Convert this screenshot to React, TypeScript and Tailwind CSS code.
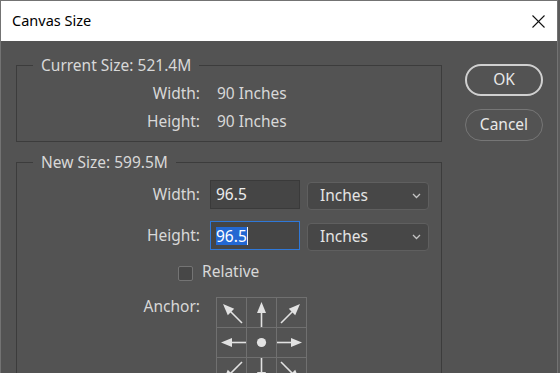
import React from "react";

type Dir = "tl" | "t" | "tr" | "l" | "c" | "r" | "bl" | "b" | "br";

const anchorCells: Dir[] = ["tl", "t", "tr", "l", "c", "r", "bl", "b", "br"];

const rotation: Record<Dir, number> = {
  tl: 0,
  tr: 90,
  br: 180,
  bl: 270,
  t: 0,
  r: 90,
  b: 180,
  l: 270,
  c: 0,
};

function AnchorArrow({ dir }: { dir: Dir }) {
  if (dir === "c") {
    return (
      <svg width="29" height="29" viewBox="0 0 29 29">
        <circle cx="14.5" cy="14.5" r="4.6" fill="#e2e2e2" />
      </svg>
    );
  }
  const diagonal = dir.length === 2;
  return (
    <svg width="29" height="29" viewBox="0 0 29 29">
      <g transform={`rotate(${rotation[dir]} 14.5 14.5)`} fill="#e2e2e2" stroke="#e2e2e2">
        {diagonal ? (
          <>
            <line x1="25" y1="25" x2="13" y2="13" strokeWidth="1.6" />
            <polygon points="6,6 17.2,10.8 10.8,17.2" stroke="none" />
          </>
        ) : (
          <>
            <line x1="14.5" y1="29" x2="14.5" y2="13" strokeWidth="1.6" />
            <polygon points="14.5,4 10,15 19,15" stroke="none" />
          </>
        )}
      </g>
    </svg>
  );
}

function Chevron() {
  return (
    <svg width="9" height="6" viewBox="0 0 9 6">
      <polyline points="1,1 4.5,4.5 8,1" fill="none" stroke="#c4c4c4" strokeWidth="1.3" />
    </svg>
  );
}

function UnitSelect() {
  return (
    <div className="ml-[7px] mt-[2px] flex h-[28px] w-[122px] items-center justify-between rounded-[4px] border border-[#5f5f5f] bg-[#474747] pl-[12px] pr-[7px] text-[#e4e4e4]">
      <span>Inches</span>
      <Chevron />
    </div>
  );
}

export default function App() {
  return (
    <div className="h-[373px] w-[560px] overflow-hidden bg-[#5b5b5b] text-[15.5px] font-['Noto_Sans',sans-serif]">
      <div className="w-[558px] border-x border-t border-[#737373]">
        {/* Title bar */}
        <div className="flex h-[40px] items-center justify-between bg-white pl-[11px] pr-[12px] text-[14.5px] text-black">
          <span>Canvas Size</span>
          <svg width="13" height="13" viewBox="0 0 13 13">
            <line x1="0.5" y1="0.5" x2="12.5" y2="12.5" stroke="#111" strokeWidth="1.1" />
            <line x1="12.5" y1="0.5" x2="0.5" y2="12.5" stroke="#111" strokeWidth="1.1" />
          </svg>
        </div>

        {/* Body */}
        <div className="flex h-[340px] bg-[#535353] pl-[15px] pt-[14px] text-[#d8d8d8]">
          <div className="w-[426px]">
            <fieldset className="border border-[#3c3c3c] pb-[5px] pt-[5px]">
              <legend className="ml-[16px] px-[8px] leading-[20px]">Current Size: 521.4M</legend>
              <div className="flex h-[28px] items-center">
                <span className="w-[183px] text-right">Width:</span>
                <span className="ml-[17px]">90 Inches</span>
              </div>
              <div className="flex h-[28px] items-center">
                <span className="w-[183px] text-right">Height:</span>
                <span className="ml-[17px]">90 Inches</span>
              </div>
            </fieldset>

            <fieldset className="mt-[10px] border border-[#3c3c3c] pb-[20px] pt-[8px]">
              <legend className="ml-[16px] px-[8px] leading-[20px]">New Size: 599.5M</legend>
              <div className="flex items-start">
                <span className="w-[183px] text-right leading-[29px]">Width:</span>
                <div className="ml-[10px] flex h-[29px] w-[90px] items-center border border-[#3a3a3a] bg-[#454545] px-[5px] text-[#ececec]">
                  96.5
                </div>
                <UnitSelect />
              </div>
              <div className="mt-[11px] flex items-start">
                <span className="w-[183px] text-right leading-[29px]">Height:</span>
                <div className="ml-[10px] flex h-[29px] w-[90px] items-center border border-[#2f78d8] bg-[#454545] px-[5px]">
                  <span className="bg-[#2368d2] leading-[18px] text-white">96.5</span>
                  <span className="h-[18px] w-px bg-[#f0f0f0]" />
                </div>
                <UnitSelect />
              </div>
              <div className="mt-[10px] flex h-[20px] items-center leading-[20px]">
                <span className="ml-[161px] mt-[5px] h-[15px] w-[15px] rounded-[2px] border border-[#747474] bg-[#474747]" />
                <span className="ml-[9px]">Relative</span>
              </div>
              <div className="mt-[15px] flex items-start">
                <span className="w-[183px] text-right leading-[20px]">Anchor:</span>
                <div className="ml-[16px] mt-[1px] grid grid-cols-[repeat(3,30px)] border-l border-t border-[#707070]">
                  {anchorCells.map((d) => (
                    <div key={d} className="h-[30px] w-[30px] border-b border-r border-[#707070]">
                      <AnchorArrow dir={d} />
                    </div>
                  ))}
                </div>
              </div>
            </fieldset>
          </div>

          <div className="ml-[23px] mt-[9px] flex flex-col gap-[13px]">
            <button className="h-[32px] w-[78px] rounded-full border-2 border-[#d0d0d0] text-[#e8e8e8]">OK</button>
            <button className="h-[32px] w-[78px] rounded-full border-[1.5px] border-[#767676] text-[#e8e8e8]">Cancel</button>
          </div>
        </div>
      </div>
    </div>
  );
}
